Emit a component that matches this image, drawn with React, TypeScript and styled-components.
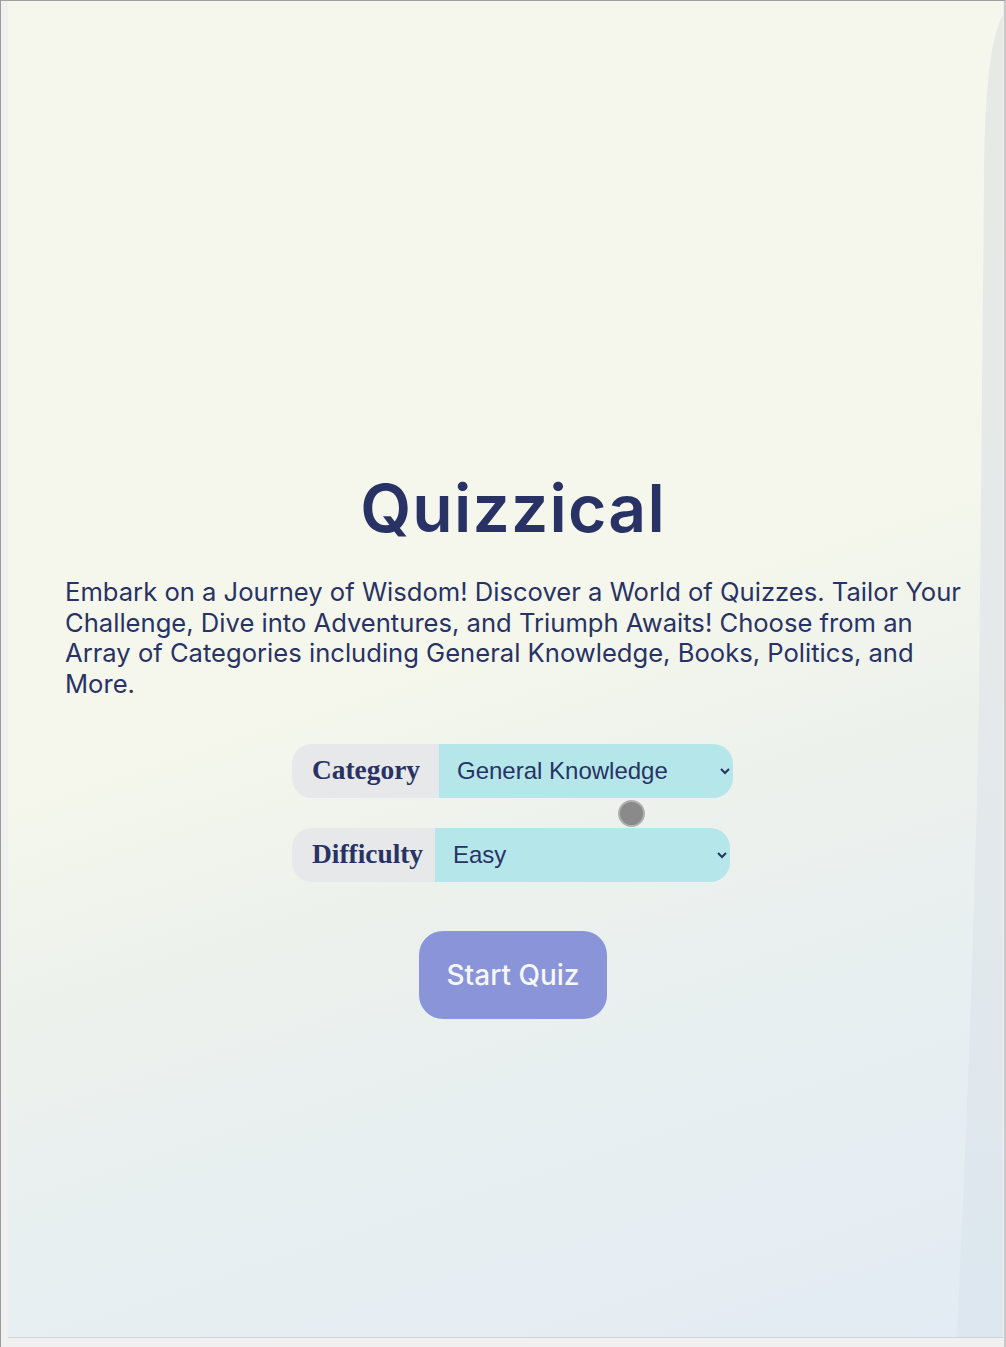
import React from "react";
import styled, { createGlobalStyle } from "styled-components";

const Global = createGlobalStyle`
  html, body { margin: 0; padding: 0; }
  body { background: #f0f0f0; }
  * { box-sizing: border-box; }
`;

const Frame = styled.div`
  width: 1006px;
  height: 1347px;
  border-top: 1px solid #a0a0a0;
  border-left: 1px solid #9a9a9a;
  border-right: 2px solid #c8c8c8;
  padding: 0 1px 9px 7px;
  background: #f0f0f0;
  display: flex;
`;

const Panel = styled.main`
  position: relative;
  flex: 1;
  overflow: hidden;
  border-bottom: 1px solid #d2d2d2;
  background:
    linear-gradient(162deg, #f5f7ec 0%, #f5f7ec 48%, #ecf1ec 62%, #e8eff1 78%, #e3ebf4 100%);
  padding: 474px 42px 0 57px;
`;

const Blob = styled.svg`
  position: absolute;
  top: 0;
  right: 0;
  width: 60px;
  height: 100%;
  pointer-events: none;
`;

const Column = styled.div`
  position: relative;
  width: 896px;
  display: flex;
  flex-direction: column;
  align-items: center;
`;

const Title = styled.h1`
  margin: 0;
  font-family: Inter, "Noto Sans", sans-serif;
  font-weight: 600;
  font-size: 66px;
  line-height: 1;
  letter-spacing: 1.2px;
  color: #293264;
`;

const Intro = styled.p`
  margin: 36px 0 0;
  align-self: stretch;
  width: 898px;
  font-family: Inter, "Noto Sans", sans-serif;
  font-weight: 400;
  font-size: 25.6px;
  line-height: 30.7px;
  color: #293264;
`;

const Form = styled.div`
  margin-top: 44px;
  width: 442px;
  display: flex;
  flex-direction: column;
  align-items: flex-start;
  gap: 30px;
`;

const Row = styled.div`
  display: flex;
  height: 54px;
`;

const Label = styled.label<{ $w: number }>`
  width: ${(p) => p.$w}px;
  height: 54px;
  display: flex;
  align-items: center;
  padding-left: 20px;
  background: #e6e8ea;
  border-radius: 20px 0 0 20px;
  font-family: "Liberation Serif", "Times New Roman", serif;
  font-weight: 700;
  font-size: 27.4px;
  color: #293264;
`;

const Select = styled.select<{ $w: number }>`
  width: ${(p) => p.$w}px;
  height: 54px;
  border: none;
  outline: none;
  border-radius: 0 20px 20px 0;
  background: #b5e6ea;
  padding: 0 17px 0 14px;
  font-family: "Liberation Sans", Arial, sans-serif;
  font-size: 24px;
  color: #293264;
`;

const StartButton = styled.button`
  margin-top: 49px;
  width: 188px;
  height: 88px;
  border: none;
  border-radius: 24px;
  background: #8a94d8;
  color: #f6f7fb;
  font-family: Inter, "Noto Sans", sans-serif;
  font-weight: 500;
  font-size: 28px;
  cursor: pointer;
`;

const TouchDot = styled.span`
  position: absolute;
  left: 553px;
  top: 325px;
  width: 27px;
  height: 27px;
  border-radius: 50%;
  background: #8a8a8a;
  border: 2px solid #b0b0b0;
`;

export default function App() {
  return (
    <>
      <Global />
      <Frame>
        <Panel>
          <Blob viewBox="0 0 60 1336" preserveAspectRatio="none">
            <defs>
              <linearGradient id="blobFill" x1="0" y1="0" x2="0" y2="1">
                <stop offset="0" stopColor="#e7e9e5" />
                <stop offset="0.5" stopColor="#e5e9ea" />
                <stop offset="1" stopColor="#dce7ef" />
              </linearGradient>
            </defs>
            <path
              d="M60 14 C 50 32, 42 70, 41 180 L 36 700 C 30 1000, 20 1200, 14 1336 L 60 1336 Z"
              fill="url(#blobFill)"
            />
          </Blob>
          <Column>
            <Title>Quizzical</Title>
            <Intro>
              Embark on a Journey of Wisdom! Discover a World of Quizzes. Tailor Your Challenge, Dive
              into Adventures, and Triumph Awaits! Choose from an Array of Categories including General
              Knowledge, Books, Politics, and More.
            </Intro>
            <Form>
              <Row>
                <Label $w={147} htmlFor="category">Category</Label>
                <Select $w={294} id="category" defaultValue="9">
                  <option value="9">General Knowledge</option>
                  <option value="10">Books</option>
                  <option value="24">Politics</option>
                </Select>
              </Row>
              <Row>
                <Label $w={143} htmlFor="difficulty">Difficulty</Label>
                <Select $w={295} id="difficulty" defaultValue="easy">
                  <option value="easy">Easy</option>
                  <option value="medium">Medium</option>
                  <option value="hard">Hard</option>
                </Select>
              </Row>
            </Form>
            <StartButton type="button">Start Quiz</StartButton>
            <TouchDot />
          </Column>
        </Panel>
      </Frame>
    </>
  );
}
